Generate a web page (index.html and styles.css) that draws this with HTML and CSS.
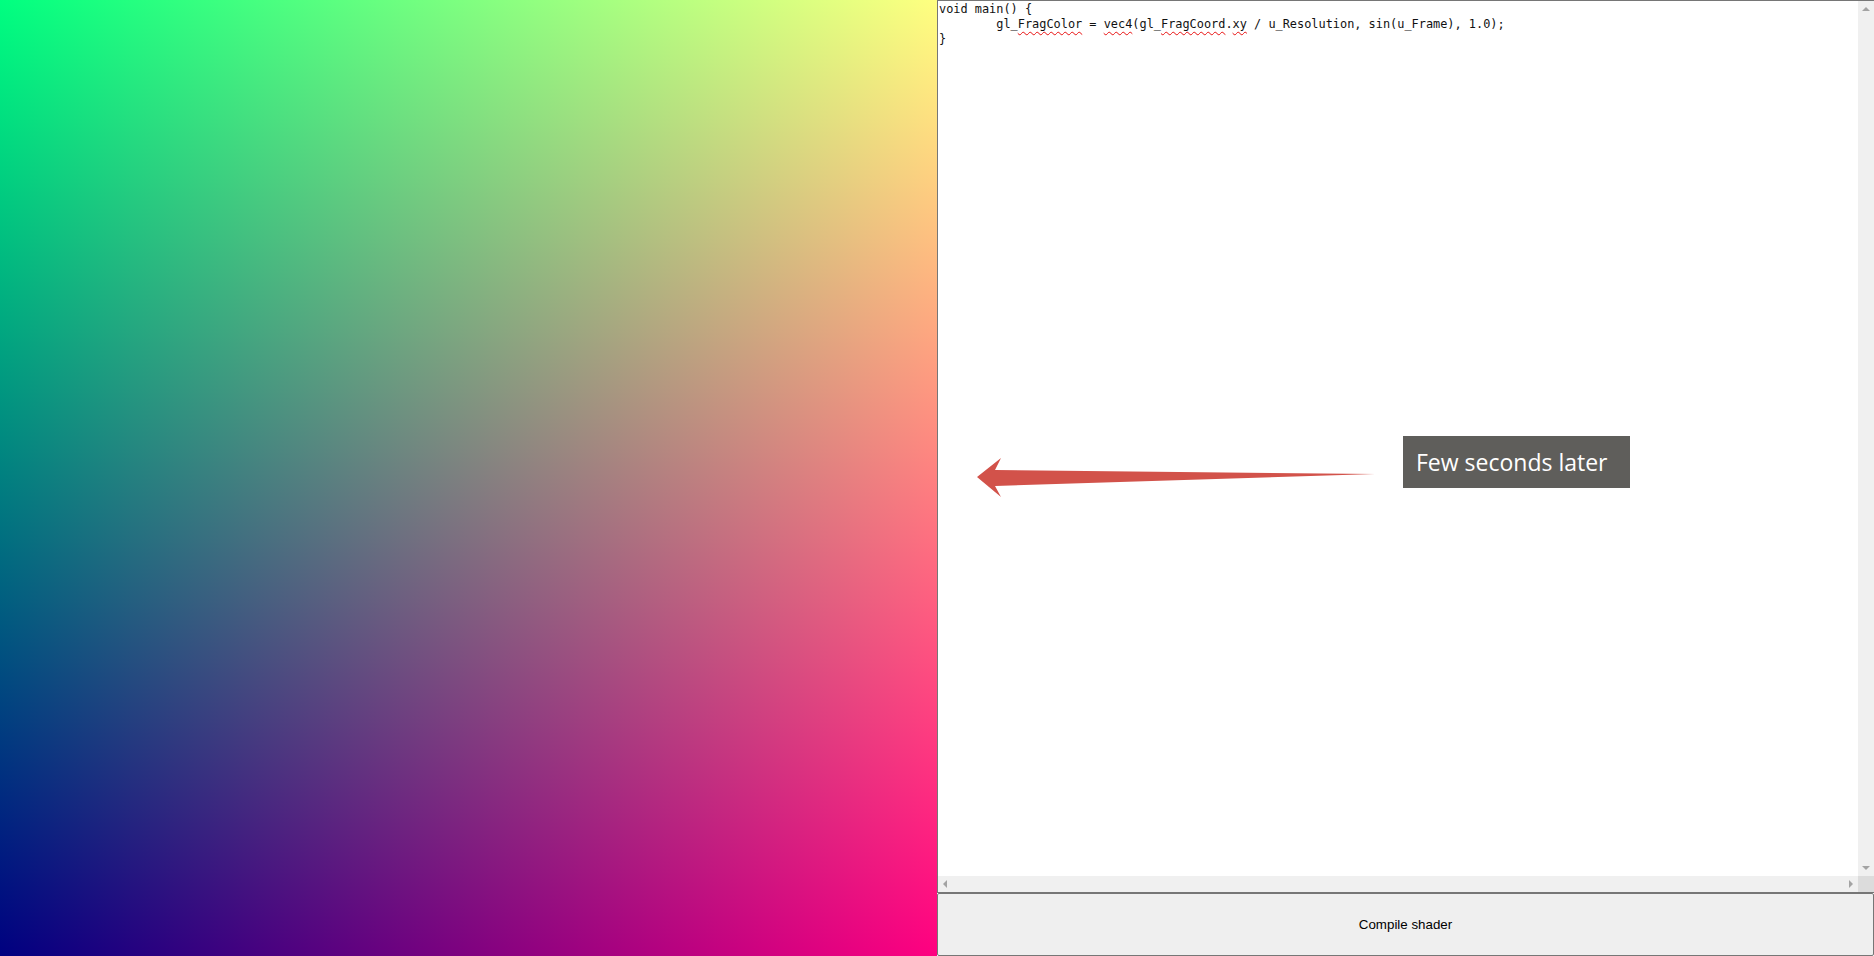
FILE: index.html
```html
<!DOCTYPE html>
<html lang="en">
<head>
<meta charset="utf-8">
<title>Shader playground</title>
<link rel="stylesheet" href="styles.css">
</head>
<body>
<div class="app">
  <div class="canvas" aria-label="Shader output"></div>
  <div class="panel">
    <div class="editor">
      <div class="editor-main">
        <pre class="code">void main() {
	gl_<span class="typo">FragColor</span> = <span class="typo">vec4</span>(gl_<span class="typo">FragCoord</span>.<span class="typo">xy</span> / u_Resolution, sin(u_Frame), 1.0);
}</pre>
        <div class="vscroll">
          <span class="arrow up"></span>
          <span class="vtrack"></span>
          <span class="arrow down"></span>
        </div>
      </div>
      <div class="hscroll">
        <div class="hbar">
          <span class="arrow left"></span>
          <span class="htrack"></span>
          <span class="arrow right"></span>
        </div>
        <div class="corner"></div>
      </div>
    </div>
    <button class="compile" type="button">Compile shader</button>

    <svg class="callout-arrow" width="410" height="46" viewBox="0 0 410 46" aria-hidden="true">
      <polygon points="4,22 28,3 22,15 402,19 22,31 28,42" fill="#d2524a"/>
    </svg>
    <div class="callout">Few seconds later</div>
  </div>
</div>
</body>
</html>
```

FILE: styles.css
```css
* { box-sizing: border-box; }

html, body {
  margin: 0;
  padding: 0;
  width: 1874px;
  height: 956px;
  overflow: hidden;
  background: #fff;
}

.app {
  display: flex;
  width: 1874px;
  height: 956px;
}

.canvas {
  width: 937px;
  height: 956px;
  flex: none;
  background:
    linear-gradient(to bottom, rgb(0, 255, 0), rgb(0, 0, 0)),
    linear-gradient(to right, rgb(0, 0, 128), rgb(255, 0, 128));
  background-blend-mode: screen;
}

.panel {
  position: relative;
  width: 937px;
  height: 956px;
  flex: none;
  display: flex;
  flex-direction: column;
}

.editor {
  height: 893px;
  flex: none;
  border: 1px solid #767676;
  border-right: none;
  display: flex;
  flex-direction: column;
  background: #fff;
}

.editor-main {
  flex: 1;
  display: flex;
  min-height: 0;
}

.code {
  flex: 1;
  margin: 0;
  padding: 1px 1px;
  font-family: "DejaVu Sans Mono", "Liberation Mono", monospace;
  font-size: 11.9px;
  line-height: 15px;
  color: #111;
  tab-size: 8;
  white-space: pre;
  overflow: hidden;
}

.typo {
  text-decoration: underline wavy #e81010;
  text-decoration-thickness: 1px;
  text-underline-offset: 3px;
}

.vscroll {
  width: 16px;
  flex: none;
  background: #f0f0f0;
  display: flex;
  flex-direction: column;
  align-items: center;
}

.vtrack { flex: 1; }

.hscroll {
  height: 16px;
  flex: none;
  display: flex;
}

.hbar {
  flex: 1;
  background: #f0f0f0;
  display: flex;
  align-items: center;
  padding: 0 5px;
}

.htrack { flex: 1; }

.corner {
  width: 16px;
  flex: none;
  background: #dcdcdc;
}

.arrow {
  display: block;
  width: 0;
  height: 0;
  border-style: solid;
  border-color: transparent;
}

.arrow.up {
  margin-top: 6px;
  border-width: 0 4px 4px 4px;
  border-bottom-color: #a3a3a3;
}

.arrow.down {
  margin-bottom: 6px;
  border-width: 4px 4px 0 4px;
  border-top-color: #a3a3a3;
}

.arrow.left {
  border-width: 4px 4px 4px 0;
  border-right-color: #a3a3a3;
}

.arrow.right {
  border-width: 4px 0 4px 4px;
  border-left-color: #a3a3a3;
}

.compile {
  height: 63px;
  flex: none;
  margin: 0;
  width: 937px;
  background: #efefef;
  border: 1px solid #767676;
  border-radius: 2px;
  font-family: "Liberation Sans", Arial, sans-serif;
  font-size: 13.33px;
  color: #000;
  padding: 0;
}

.callout-arrow {
  position: absolute;
  left: 36px;
  top: 455px;
}

.callout {
  position: absolute;
  left: 466px;
  top: 436px;
  width: 227px;
  height: 52px;
  background: #5f5e5b;
  color: #fff;
  font-family: "Open Sans", "Noto Sans", sans-serif;
  font-size: 23px;
  line-height: 52px;
  padding-left: 13px;
  letter-spacing: 0;
}
```
